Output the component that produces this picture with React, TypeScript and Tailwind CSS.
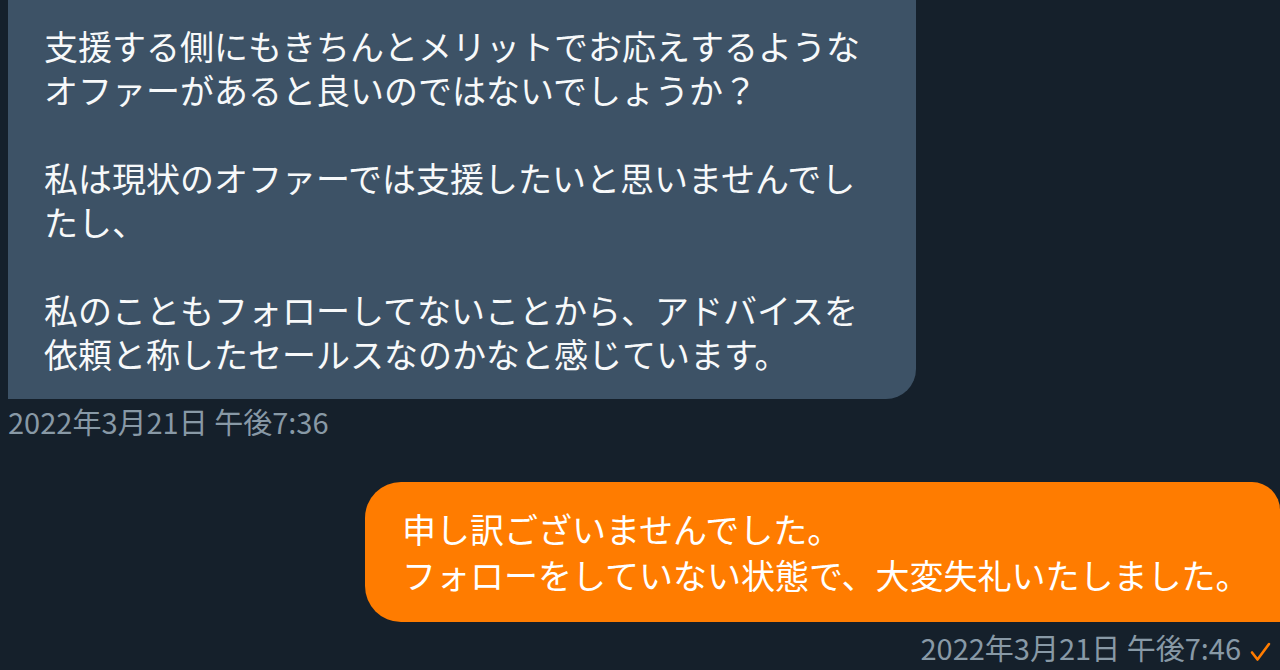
const received = [
  "支援する側にもきちんとメリットでお応えするような",
  "オファーがあると良いのではないでしょうか？",
  "",
  "私は現状のオファーでは支援したいと思いませんでし",
  "たし、",
  "",
  "私のこともフォローしてないことから、アドバイスを",
  "依頼と称したセールスなのかなと感じています。",
];

const sent = [
  "申し訳ございませんでした。",
  "フォローをしていない状態で、大変失礼いたしました。",
];

export default function App() {
  return (
    <div className="h-[670px] overflow-hidden bg-[#15202b] font-['Noto_Sans_CJK_JP',sans-serif]">
      <div className="pl-2">
        <div className="w-[908px] rounded-br-[30px] bg-[#3d5266] pt-[24px] pb-[23px] pl-[36px] text-[34px] leading-[44px] text-[#f7f9fa]">
          {received.map((line, i) => (
            <div key={i} className="h-[44px] whitespace-nowrap">
              {line}
            </div>
          ))}
        </div>
        <div className="mt-[7px] text-[29px] leading-[30px] text-[#8899a6]">
          2022年3月21日 午後7:36
        </div>
      </div>

      <div className="mt-[46px] flex justify-end">
        <div className="w-[915px] rounded-l-[36px] rounded-tr-[28px] bg-[#ff7c00] pt-[24px] pb-[24px] pl-[37px] text-[34px] leading-[46px] text-white">
          {sent.map((line, i) => (
            <div key={i} className="whitespace-nowrap">
              {line}
            </div>
          ))}
        </div>
      </div>

      <div className="mt-[10px] flex items-center justify-end pr-[8px]">
        <span className="text-[29px] leading-[30px] text-[#8899a6]">
          2022年3月21日 午後7:46
        </span>
        <svg
          width="22"
          height="20"
          viewBox="0 0 22 20"
          className="ml-[9px] mt-[10px]"
          fill="none"
          stroke="#ff7c00"
          strokeWidth="2.6"
          strokeLinecap="round"
          strokeLinejoin="round"
        >
          <path d="M2 10.5 L7.5 17.5 L19 2" />
        </svg>
      </div>
    </div>
  );
}
